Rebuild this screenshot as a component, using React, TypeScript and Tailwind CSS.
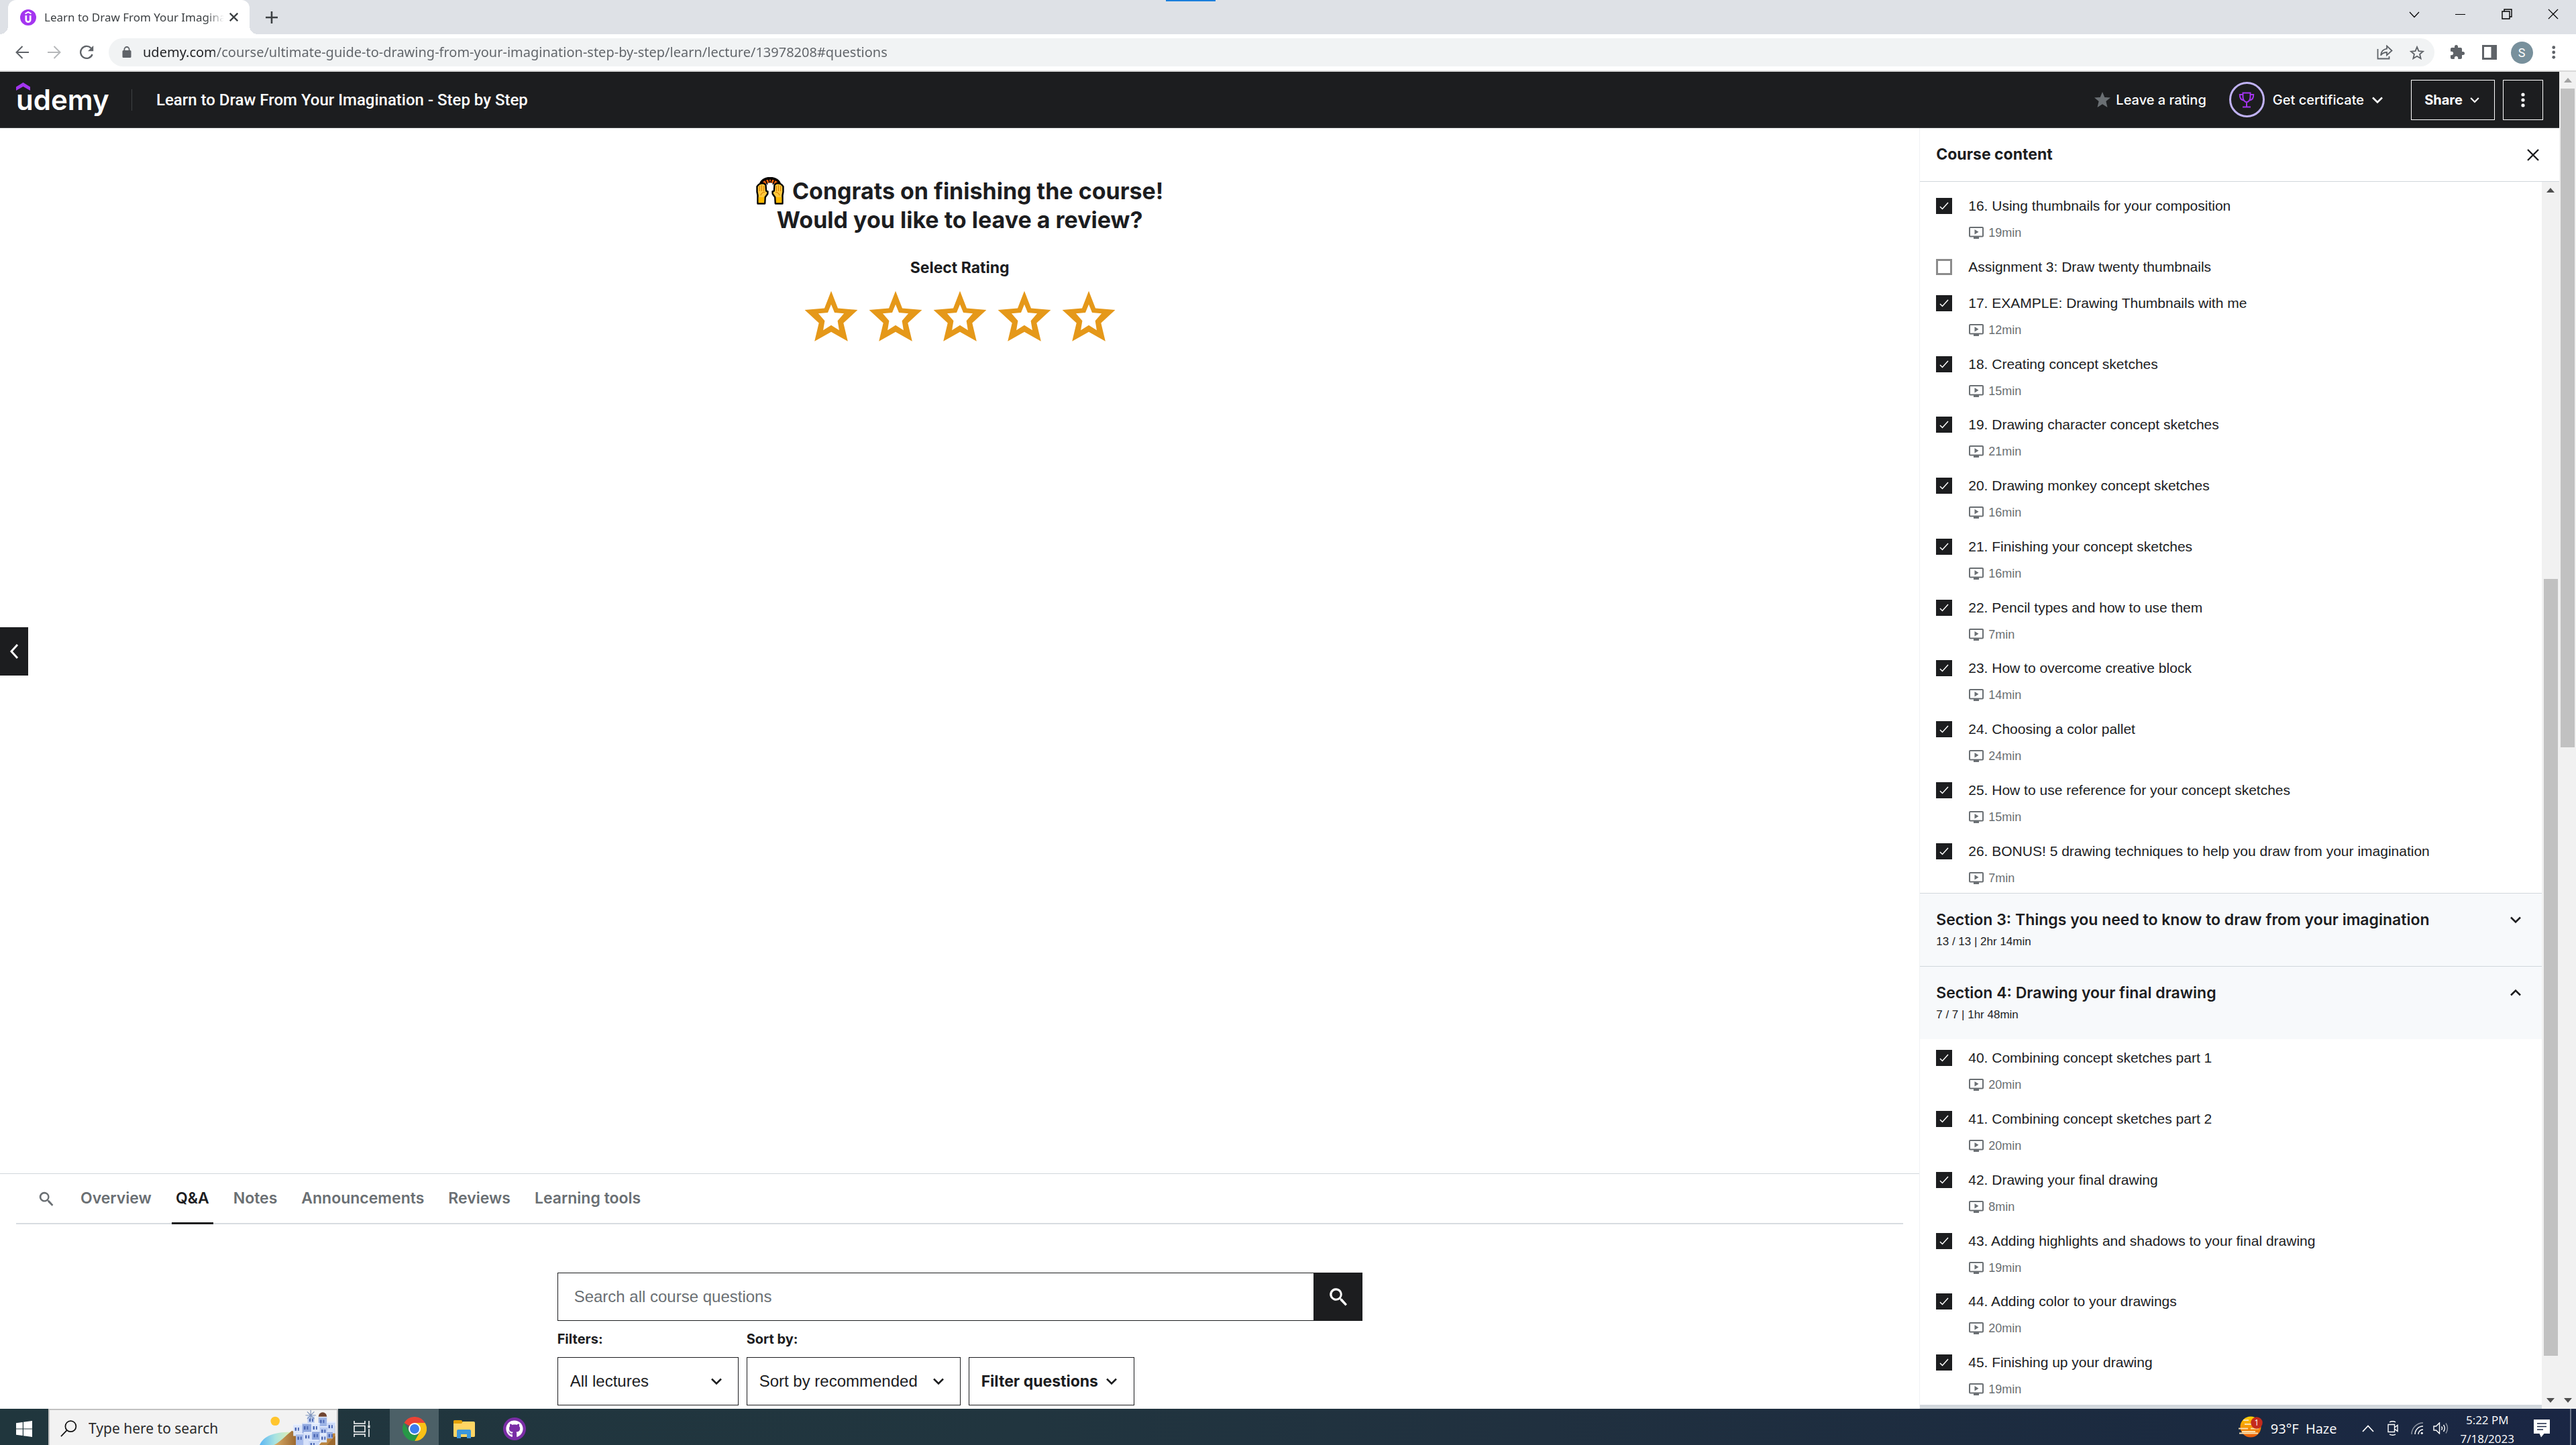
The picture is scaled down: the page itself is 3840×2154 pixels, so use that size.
import React from "react";
import { FaGithub } from "react-icons/fa";
import { MdExtension } from "react-icons/md";

type Lesson = { title: string; time?: string };

const sectionTwo: Lesson[] = [
  { title: "16. Using thumbnails for your composition", time: "19min" },
  { title: "Assignment 3: Draw twenty thumbnails" },
  { title: "17. EXAMPLE: Drawing Thumbnails with me", time: "12min" },
  { title: "18. Creating concept sketches", time: "15min" },
  { title: "19. Drawing character concept sketches", time: "21min" },
  { title: "20. Drawing monkey concept sketches", time: "16min" },
  { title: "21. Finishing your concept sketches", time: "16min" },
  { title: "22. Pencil types and how to use them", time: "7min" },
  { title: "23. How to overcome creative block", time: "14min" },
  { title: "24. Choosing a color pallet", time: "24min" },
  { title: "25. How to use reference for your concept sketches", time: "15min" },
  { title: "26. BONUS! 5 drawing techniques to help you draw from your imagination", time: "7min" },
];

const sectionFour: Lesson[] = [
  { title: "40. Combining concept sketches part 1", time: "20min" },
  { title: "41. Combining concept sketches part 2", time: "20min" },
  { title: "42. Drawing your final drawing", time: "8min" },
  { title: "43. Adding highlights and shadows to your final drawing", time: "19min" },
  { title: "44. Adding color to your drawings", time: "20min" },
  { title: "45. Finishing up your drawing", time: "19min" },
];

const pageTabs = ["Overview", "Q&A", "Notes", "Announcements", "Reviews", "Learning tools"];

function Chevron({ className = "size-6", up = false }: { className?: string; up?: boolean }) {
  return (
    <svg viewBox="0 0 24 24" className={className} fill="none" stroke="currentColor" strokeWidth="2.6" aria-hidden="true">
      <path d={up ? "M5 15.5l7-7 7 7" : "M5 8.5l7 7 7-7"} />
    </svg>
  );
}

function Cross({ className, width = 2 }: { className: string; width?: number }) {
  return (
    <svg viewBox="0 0 18 18" className={className} fill="none" stroke="currentColor" strokeWidth={width} aria-hidden="true">
      <path d="M1 1l16 16M17 1L1 17" />
    </svg>
  );
}

function Dots({ className }: { className: string }) {
  return (
    <svg viewBox="0 0 6 24" className={className} fill="currentColor" aria-hidden="true">
      <circle cx="3" cy="4" r="2.6" />
      <circle cx="3" cy="12" r="2.6" />
      <circle cx="3" cy="20" r="2.6" />
    </svg>
  );
}

function Magnifier({ className }: { className: string }) {
  return (
    <svg viewBox="0 0 24 24" className={className} fill="currentColor" aria-hidden="true">
      <path d="M16.4 14.2h-1.1l-.4-.4a7.4 7.4 0 1 0-1.1 1.1l.4.4v1.1L20.500 22.800l1.900-1.900zM9.300 14.200a4.900 4.900 0 1 1 0-9.800 4.900 4.900 0 0 1 0 9.800z" />
    </svg>
  );
}

function TabStrip() {
  return (
    <div className="relative flex h-[51px] shrink-0 bg-[#dee1e6]">
      <span className="absolute left-[1738px] top-0 h-[2px] w-[74px] bg-[#1a7fdc]" />
      <div className="relative ml-3 flex w-[360px] items-center rounded-t-xl bg-white pl-[18px] pr-[10px] before:absolute before:-left-3 before:bottom-0 before:size-3 before:bg-[radial-gradient(circle_at_0_0,transparent_12px,white_12px)] after:absolute after:-right-3 after:bottom-0 after:size-3 after:bg-[radial-gradient(circle_at_100%_0,transparent_12px,white_12px)]">
        <svg viewBox="0 0 24 24" className="size-6 shrink-0" aria-hidden="true">
          <circle cx="12" cy="12" r="12" fill="#a435f0" />
          <path d="M7.500 6.700L12 4l4.500 2.700" fill="none" stroke="white" strokeWidth="2" />
          <path d="M8.800 9v6.500a3.200 3.200 0 0 0 6.400 0V9" fill="none" stroke="white" strokeWidth="2.700" />
        </svg>
        <span className="ml-3 flex-1 overflow-hidden whitespace-nowrap font-['Noto_Sans',sans-serif] text-[17px] leading-6 text-[#3c4043] [mask-image:linear-gradient(90deg,black_90%,transparent)]">
          Learn to Draw From Your Imagination
        </span>
        <button aria-label="Close tab" className="grid size-7 place-items-center text-[#3c4043]">
          <Cross className="size-[13px]" width={3.200} />
        </button>
      </div>
      <button aria-label="New tab" className="ml-[15px] grid w-9 place-items-center text-[#3c4043]">
        <svg viewBox="0 0 18 18" className="size-[18px]" stroke="currentColor" strokeWidth="2.600" aria-hidden="true">
          <path d="M9 0v18M0 9h18" />
        </svg>
      </button>
      <div className="ml-auto flex h-[42px] text-black">
        <button aria-label="Search tabs" className="grid w-[69px] place-items-center">
          <svg viewBox="0 0 16 10" className="mt-0.5 w-4" fill="none" stroke="currentColor" strokeWidth="1.200"><path d="M1 1l7 7.500L15 1" /></svg>
        </button>
        <button aria-label="Minimize" className="grid w-[69px] place-items-center">
          <span className="h-px w-[15px] bg-black" />
        </button>
        <button aria-label="Restore" className="grid w-[69px] place-items-center">
          <svg viewBox="0 0 16 16" className="size-4" fill="none" stroke="currentColor" strokeWidth="1.400"><path d="M1 4h11v11H1zM4 4V1h11v11h-3" /></svg>
        </button>
        <button aria-label="Close" className="grid w-[69px] place-items-center">
          <Cross className="size-4" width={1.400} />
        </button>
      </div>
    </div>
  );
}

function Toolbar() {
  const btn = "grid w-12 shrink-0 place-items-center text-[#5f6368]";
  return (
    <div className="flex h-14 shrink-0 items-stretch border-b-2 border-[#d9d9d9] bg-white pl-[9px] pr-[9px]">
      <button aria-label="Back" className={btn}>
        <svg viewBox="0 0 20 20" className="size-5" fill="none" stroke="currentColor" strokeWidth="2"><path d="M10.500 1L1.500 10l9 9M1.500 10H20" /></svg>
      </button>
      <button aria-label="Forward" className={btn + " opacity-45"}>
        <svg viewBox="0 0 20 20" className="size-5" fill="none" stroke="currentColor" strokeWidth="2"><path d="M9.500 1l9 9-9 9M18.500 10H0" /></svg>
      </button>
      <button aria-label="Reload" className={btn}>
        <svg viewBox="0 0 22 22" className="size-[22px]" fill="none" stroke="currentColor" strokeWidth="2.300"><path d="M17.600 4.600A9 9 0 1 0 19.600 14" /><path d="M21.200 1v8.200h-8.200z" fill="currentColor" stroke="none" /></svg>
      </button>
      <div className="my-1.5 ml-[9px] mr-[10px] flex flex-1 items-stretch rounded-full bg-[#f1f3f4] pl-[3px] pr-[2px]">
        <button aria-label="Site information" className={btn}>
          <svg viewBox="0 0 14 18" className="h-[18px]" fill="currentColor"><path d="M2 6h10a1.500 1.500 0 0 1 1.500 1.500v8A1.500 1.500 0 0 1 12 17H2a1.500 1.500 0 0 1-1.500-1.500v-8A1.500 1.500 0 0 1 2 6z" /><path d="M3.400 7V4.600a3.600 3.600 0 0 1 7.200 0V7" fill="none" stroke="currentColor" strokeWidth="1.800" /></svg>
        </button>
        <input
          aria-label="Address"
          readOnly
          value="udemy.com/course/ultimate-guide-to-drawing-from-your-imagination-step-by-step/learn/lecture/13978208#questions"
          className="flex-1 bg-[linear-gradient(90deg,#202124_107px,#5f6368_107px)] bg-clip-text font-['Noto_Sans',sans-serif] text-[20px] text-transparent outline-none"
        />
        <button aria-label="Share page" className={btn}>
          <svg viewBox="0 0 24 22" className="w-6" fill="none" stroke="currentColor" strokeWidth="1.800"><path d="M1.500 6v14.500h17V17" /><path d="M15 1.500l7.500 7-7.500 6.700v-4.200c-4.500 0-7 1.500-9 4.500.5-5.500 3.500-9 9-9.800z" /></svg>
        </button>
        <button aria-label="Bookmark" className={btn}>
          <svg viewBox="0 0 22 21" className="w-[22px]" fill="none" stroke="currentColor" strokeWidth="1.900"><path d="M11 2.200l2.500 6 6.500.5-4.900 4.200 1.500 6.300-5.600-3.400-5.600 3.400 1.500-6.300L2 8.700l6.500-.5z" /></svg>
        </button>
      </div>
      <button aria-label="Extensions" className={btn}><MdExtension className="size-6" /></button>
      <button aria-label="Side panel" className={btn}>
        <svg viewBox="0 0 22 22" className="size-[22px]"><path fill="currentColor" fillRule="evenodd" d="M0 0h22v22H0zM3 3v16h10.500V3z" /></svg>
      </button>
      <button aria-label="Profile" className={btn}>
        <span className="grid size-[33px] place-items-center rounded-full bg-[#78909c] font-[Roboto,sans-serif] text-[18px] text-white">S</span>
      </button>
      <button aria-label="Browser menu" className={btn}><Dots className="h-[22px]" /></button>
    </div>
  );
}

function Header() {
  return (
    <header className="flex h-[84px] shrink-0 items-center border-b border-[#3e4143] bg-[#1c1d1f] px-6 text-white">
      <a href="#home" className="relative w-[136px] font-[Inter,sans-serif] text-[42px] font-semibold leading-[51px]">
        udemy
        <svg viewBox="0 0 21 12" className="absolute left-0 top-0 w-[21px]" aria-hidden="true"><path fill="#a435f0" d="M0 6.500L10.500 0 21 6.500V12L10.500 6 0 12z" /></svg>
      </a>
      <span className="ml-9 h-8 w-px bg-[#3e4143]" />
      <a href="#course" className="ml-9 font-[Roboto,sans-serif] text-[24px] font-medium leading-8">Learn to Draw From Your Imagination - Step by Step</a>
      <button className="ml-auto flex items-center gap-2 font-[Inter,sans-serif] text-[20px] font-medium">
        <svg viewBox="0 0 24 23" className="w-6" fill="#6a6f73" aria-hidden="true"><path d="M12 0l3.300 7.900 8.700.6-6.600 5.500 2.100 9L12 18.300 4.500 23l2.100-9L0 8.500l8.700-.6z" /></svg>
        Leave a rating
      </button>
      <button className="ml-[34px] flex items-center font-[Inter,sans-serif] text-[20px] font-medium">
        <span className="mr-3 grid size-[53px] place-items-center rounded-full border-[3px] border-[#c0b2f5]">
          <svg viewBox="0 0 24 24" className="size-6" fill="none" stroke="#a435f0" strokeWidth="2" aria-hidden="true"><path d="M6.500 1.500h11v6c0 5-2 7-5.500 8-3.500-1-5.500-3-5.500-8zM6.500 4H1.800c0 5 1.200 8 5.400 8.400M17.500 4h4.700c0 5-1.200 8-5.400 8.400M12 15.500V22M6 22.500h12" /></svg>
        </span>
        Get certificate
        <Chevron className="ml-2 size-6" />
      </button>
      <button className="ml-[38px] flex h-[60px] w-[125px] items-center justify-center gap-2 border border-white font-[Inter,sans-serif] text-[20px] font-bold">
        Share
        <Chevron className="size-5" />
      </button>
      <button aria-label="More options" className="ml-3 grid h-[60px] w-[60px] place-items-center border border-white"><Dots className="h-6" /></button>
    </header>
  );
}

function RaisedHands() {
  return (
    <svg viewBox="0 0 42 41" className="w-[42px]" aria-hidden="true">
      <path d="M9 12a12 8 0 0 1 24 0" fill="none" stroke="#000" strokeWidth="8.500" />
      <path d="M10.500 10.500a11 6.500 0 0 1 21 0" fill="none" stroke="#f7630c" strokeWidth="4.500" />
      <path d="M13 2l4 9M18 .5L20 8M24 .5L22 8M29 2l-4 9" stroke="#000" strokeWidth="1.700" />
      <path d="M15.500 12.500a7 5 0 0 1 11 0l-1.500 4h-8z" fill="#fff" />
      <g id="hand">
        <path d="M2.500 39.500V27L1.500 22V14L4 11l3-1.500 4-.5 3.500 2.500.6 9 2.400.8-.2 3.700-3.600 5-.5 9.500z" fill="#ffc83d" stroke="#000" strokeWidth="2.400" strokeLinejoin="round" />
        <path d="M5.500 13v8M8.500 12v9M11.500 13v8M7 27c1-3 3-4.500 6-4.500" fill="none" stroke="#d67d00" strokeWidth="1.100" />
        <path d="M3.700 30h8.400v8.200H3.700z" fill="#ffb900" />
      </g>
      <use href="#hand" transform="matrix(-1 0 0 1 42 0)" />
    </svg>
  );
}

function ReviewPanel() {
  return (
    <section className="relative flex flex-1 flex-col items-center pt-[72px] text-[#1c1d1f]">
      <h1 className="text-center font-[Inter,sans-serif] text-[34px] font-bold leading-[43px]">
        <span className="flex items-center gap-3"><RaisedHands />Congrats on finishing the course!</span>
        Would you like to leave a review?
      </h1>
      <fieldset className="mt-8 flex">
        <legend className="mx-auto mb-[6px] font-[Inter,sans-serif] text-[23px] font-bold leading-9">Select Rating</legend>
        {[1, 2, 3, 4, 5].map((n) => (
          <label key={n} className="relative">
            <input type="radio" name="rating" aria-label={n + " stars"} className="sr-only" />
            <svg viewBox="0 0 96 96" className="size-24" aria-hidden="true">
              <path fill="#e59819" fillRule="evenodd" d="M48 10.700L58 36.500l29.400 2.500L66.300 58.500l6.500 27.200L48 71.700 23.200 85.700l6.500-27.200L8.600 39 38 36.500zM48 30.700L43 43l-14.100 1.300 9.500 11-2.300 14L48 61.700l11.900 7.600-2.300-14 9.500-11L53 43z" />
            </svg>
          </label>
        ))}
      </fieldset>
      <button aria-label="Previous lecture" className="absolute left-0 top-[744px] grid h-[72px] w-[42px] place-items-center bg-[#1c1d1f] text-white">
        <svg viewBox="0 0 14 24" className="h-6" fill="none" stroke="currentColor" strokeWidth="3"><path d="M12 2L3 12l9 10" /></svg>
      </button>
    </section>
  );
}

function SelectBox({ id, label, value, className }: { id: string; label: string; value: string; className: string }) {
  return (
    <div className={className}>
      <label htmlFor={id} className="mb-3 block font-[Inter,sans-serif] text-[20px] font-bold leading-[30px]">{label}</label>
      <div className="relative flex items-center">
        <select id={id} className="h-[72px] w-full appearance-none border border-[#1c1d1f] bg-white pl-[18px] font-['Liberation_Sans',sans-serif] text-[24px]">
          <option>{value}</option>
        </select>
        <Chevron className="pointer-events-none absolute right-[21px] size-6" />
      </div>
    </div>
  );
}

function QuestionsPanel() {
  return (
    <section className="shrink-0 border-t border-[#d1d7dc] pb-[5px] text-[#1c1d1f]">
      <nav className="mx-6 flex h-[75px] items-stretch border-b-2 border-[#d8dce1] font-[Inter,sans-serif] text-[23px] font-semibold text-[#6a6f73]">
        <button aria-label="Search" className="grid w-[90px] place-items-center"><Magnifier className="size-6" /></button>
        <div className="-mb-[2px] flex gap-6">
          {pageTabs.map((t) => (
            <button key={t} className={t === "Q&A" ? "border-b-[3px] border-[#1c1d1f] px-1.5 text-[#1c1d1f]" : "px-1.5 pb-[3px]"}>{t}</button>
          ))}
        </div>
      </nav>
      <div className="mx-auto mt-[72px] w-full max-w-[1200px]">
        <form className="flex h-[72px]" onSubmit={(e) => e.preventDefault()}>
          <input aria-label="Search all course questions" placeholder="Search all course questions" className="flex-1 border border-[#1c1d1f] px-6 font-['Liberation_Sans',sans-serif] text-[24px] placeholder:text-[#6a6f73]" />
          <button aria-label="Submit search" className="grid w-[72px] place-items-center bg-[#1c1d1f] text-white"><Magnifier className="size-[30px]" /></button>
        </form>
        <div className="mt-3 flex items-end gap-3">
          <SelectBox id="filters" label="Filters:" value="All lectures" className="w-[270px]" />
          <SelectBox id="sort" label="Sort by:" value="Sort by recommended" className="w-[319px]" />
          <button className="flex h-[72px] w-[247px] items-center justify-between border border-[#1c1d1f] pl-[18px] pr-[21px] font-[Inter,sans-serif] text-[23px] font-bold">
            Filter questions
            <Chevron className="size-6" />
          </button>
        </div>
      </div>
    </section>
  );
}

function LessonRow({ title, time }: Lesson) {
  return (
    <li className={time ? "flex-[1_0_90px] px-6 pt-4" : "h-[54px] shrink-0 px-6 pt-4"}>
      <label className="flex items-center gap-6 font-['Liberation_Sans',sans-serif] text-[21px] leading-6 text-[#1c1d1f]">
        <span className="grid place-items-center *:col-start-1 *:row-start-1">
          <input type="checkbox" defaultChecked={!!time} className="size-6 appearance-none border-[3px] border-[#8c8c8c] checked:border-[#1c1d1f] checked:bg-[#1c1d1f]" />
          {time && (
            <svg viewBox="0 0 14 12" className="pointer-events-none w-[14px]" fill="none" stroke="white" strokeWidth="1.500" aria-hidden="true"><path d="M1 7l3.500 3.500L13 1" /></svg>
          )}
        </span>
        {title}
      </label>
      {time && (
        <div className="mt-4 flex items-center gap-[7px] pl-[49px] font-['Liberation_Sans',sans-serif] text-[18px] leading-6 text-[#6a6f73]">
          <svg viewBox="0 0 22 18" className="w-[22px]" fill="currentColor" aria-hidden="true"><path fillRule="evenodd" d="M2 0h18a2 2 0 0 1 2 2v11.500a2 2 0 0 1-2 2h-5V18H7v-2.500H2a2 2 0 0 1-2-2V2a2 2 0 0 1 2-2zM2 2v11.500h18V2z" /><path d="M8.500 4l6 3.800-6 3.800z" /></svg>
          {time}
        </div>
      )}
    </li>
  );
}

function SectionHeader({ title, meta, open }: { title: string; meta: string; open: boolean }) {
  return (
    <button aria-expanded={open} className="h-[109px] shrink-0 border-t border-[#d1d7dc] bg-[#f7f9fb] px-6 text-left text-[#1c1d1f]">
      <span className="flex items-center justify-between pr-[3px] font-[Inter,sans-serif] text-[23px] font-semibold leading-9">
        {title}
        <Chevron up={open} className="size-6" />
      </span>
      <span className="mb-1 block pt-[3px] font-['Liberation_Sans',sans-serif] text-[17px] leading-6">{meta}</span>
    </button>
  );
}

function Arrow({ down = false, className }: { down?: boolean; className: string }) {
  return (
    <button aria-label={down ? "Scroll down" : "Scroll up"} className="grid h-[25px] w-full shrink-0 place-items-center">
      <svg viewBox="0 0 12 7" className={className} fill="currentColor"><path d={down ? "M0 0h12L6 7z" : "M0 7h12L6 0z"} /></svg>
    </button>
  );
}

function Sidebar() {
  return (
    <aside className="flex w-1/4 shrink-0 flex-col border-l border-[#f0f2f4]">
      <div className="flex h-20 shrink-0 items-center justify-between border-b border-[#d1d7dc] pl-6 pr-[30px]">
        <h2 className="font-[Inter,sans-serif] text-[23px] font-bold text-[#1c1d1f]">Course content</h2>
        <button aria-label="Close panel" className="text-[#1c1d1f]"><Cross className="size-[18px]" width={2.400} /></button>
      </div>
      <div className="flex min-h-0 flex-1">
        <div className="flex flex-1 flex-col overflow-hidden border-b-[6px] border-[#d1d7dc] pt-2">
          <ul className="flex flex-[11_0_auto] flex-col">{sectionTwo.map((l) => <LessonRow key={l.title} {...l} />)}</ul>
          <SectionHeader title="Section 3: Things you need to know to draw from your imagination" meta="13 / 13 | 2hr 14min" open={false} />
          <SectionHeader title="Section 4: Drawing your final drawing" meta="7 / 7 | 1hr 48min" open />
          <ul className="flex flex-[6_0_auto] flex-col">{sectionFour.map((l) => <LessonRow key={l.title} {...l} />)}</ul>
        </div>
        <div className="flex w-[26px] flex-col items-center bg-[#f1f1f1]">
          <Arrow className="w-3 text-[#505050]" />
          <span className="flex-[567]" />
          <span className="w-[21px] flex-[1157] bg-[#c1c1c1]" />
          <span className="flex-[54]" />
          <Arrow down className="w-3 text-[#505050]" />
        </div>
      </div>
    </aside>
  );
}

function Castle() {
  const houses: [number, number, number, number, string][] = [
    [78, 8, 11, 16, "#c3d3f3"],
    [95, 10, 13, 18, "#9db4e6"],
    [108, 18, 13, 18, "#cfdcf7"],
    [56, 22, 14, 18, "#dbe5fa"],
    [70, 20, 14, 18, "#8ea6de"],
    [84, 20, 13, 14, "#dde8fc"],
    [97, 25, 12, 15, "#b7c9f1"],
    [60, 36, 12, 18, "#a9bdec"],
    [72, 34, 13, 20, "#d7e2fa"],
    [85, 32, 12, 18, "#90a8df"],
    [97, 36, 11, 14, "#dce6fb"],
    [108, 32, 9, 12, "#99afe2"],
    [80, 46, 16, 8, "#c9d7f5"],
  ];
  return (
    <svg viewBox="0 0 121 54" className="h-full w-[121px]" aria-hidden="true">
      <defs>
        <linearGradient id="sea" x1="0" x2="1"><stop offset="0" stopColor="#5ab6f5" /><stop offset=".5" stopColor="#a9e3e0" /><stop offset="1" stopColor="#e0efb5" /></linearGradient>
        <linearGradient id="rock" x1="0" x2="1"><stop offset="0" stopColor="#dcae68" /><stop offset="1" stopColor="#8f5d28" /></linearGradient>
      </defs>
      <path d="M4 54C10 40 26 34 52 34v20z" fill="url(#sea)" />
      <circle cx="28" cy="17" r="7" fill="#ffc52e" />
      <path d="M26 54c8-3 20-16 28-22l12 6v16z" fill="url(#rock)" />
      <path d="M96 54l25-30v30z" fill="#b98440" />
      {houses.map(([x, y, w, h, fill], i) => (
        <g key={i}>
          <path d={`M${x} ${y}h${w}v${h}h-${w}z`} fill={fill} />
          <path d={`M${x} ${y}h${w}v1.500h-${w}z`} fill="#eef4ff" />
          <path d={`M${x + 2.5} ${y + 5}h2.500v5h-2.500zM${x + 7} ${y + 5}h2v5h-2z`} fill="#4a66b3" />
        </g>
      ))}
      <path d="M95 10a6.500 6.500 0 0 1 13 0z" fill="#6f4430" />
      <path d="M83 0v16M75 8h16M77.500 2.500l11 11M88.500 2.500l-11 11" stroke="#7f94bb" strokeWidth="1.200" />
      <path d="M108 54l13-14v14z" fill="#9c692f" />
    </svg>
  );
}

function Taskbar() {
  return (
    <footer className="flex h-[54px] shrink-0 items-stretch bg-[linear-gradient(90deg,#20363d_0%,#21353f_40%,#20303f_60%,#1b2a40_85%,#1a2644_100%)] font-['Open_Sans',sans-serif] text-white">
      <button aria-label="Start" className="grid w-[72px] place-items-center pt-1.5">
        <svg viewBox="0 0 24 24" className="size-6" fill="white"><path d="M0 3.300l9.800-1.400v9.500H0zM11 1.700L24 0v11.400H11zM0 12.600h9.800v9.500L0 20.700zM11 12.600h13V24l-13-1.700z" /></svg>
      </button>
      <label className="flex w-[432px] items-stretch border-x-2 border-t-2 border-[#c1c1c1] bg-[#f2f2f2] pl-4">
        <svg viewBox="0 0 26 26" className="mt-[15px] size-[25px] shrink-0" fill="none" stroke="#111" strokeWidth="1.800" aria-hidden="true"><circle cx="16" cy="9.500" r="8.300" /><path d="M10.300 15.500L1 25" /></svg>
        <input aria-label="Type here to search" placeholder="Type here to search" className="ml-[17px] w-0 min-w-0 flex-1 bg-transparent pt-1 font-['Noto_Sans',sans-serif] text-[21px] outline-none placeholder:text-[#2b2b2b]" />
        <Castle />
      </label>
      <button aria-label="Task view" className="grid w-[77px] place-items-center pr-1.5 pt-1.5">
        <svg viewBox="0 0 25 24" className="w-[25px]" fill="none" stroke="white" strokeWidth="1.500"><path d="M1 0v4h16V0M1 24v-4h16v4M1 7.500h16v9H1zM23 0v6M23 12v12" /><path d="M21.500 6.500h3v4h-3z" fill="white" stroke="none" /></svg>
      </button>
      <button aria-label="Chrome" className="grid w-[73px] place-items-center bg-[#4c6067] pt-1.5">
        <svg viewBox="0 0 36 36" className="size-9">
          <path d="M18 18L2.400 9A18 18 0 0 1 33.600 9z" fill="#ea4335" />
          <path d="M18 9h15.600A18 18 0 0 1 18 36l7.800-13.500z" fill="#fbc116" />
          <path d="M2.400 9l7.800 13.500L18 27h5.200L18 36A18 18 0 0 1 2.400 9z" fill="#279847" />
          <circle cx="18" cy="18" r="9" fill="white" />
          <circle cx="18" cy="18" r="7" fill="#3b7ded" />
        </svg>
      </button>
      <button aria-label="File Explorer" className="grid w-[76px] place-items-center pt-1.5">
        <svg viewBox="0 0 32 27" className="w-8">
          <path d="M0 1.500A1.500 1.500 0 0 1 1.500 0H12l2 3h16a2 2 0 0 1 2 2v18a2 2 0 0 1-2 2H2a2 2 0 0 1-2-2z" fill="#e3a008" />
          <path d="M0 5h12l2-3h16a2 2 0 0 1 2 2v19a2 2 0 0 1-2 2H2a2 2 0 0 1-2-2z" fill="#ffd564" />
          <path d="M5 27V16a2 2 0 0 1 2-2h17a2 2 0 0 1 2 2v11h-6v-6h-9v6z" fill="#3c97dc" />
        </svg>
      </button>
      <button aria-label="GitHub Desktop" className="grid w-[73px] place-items-center pt-1.5">
        <span className="grid size-[34px] place-items-center rounded-full bg-[#7a2da6]"><FaGithub className="size-[26px]" /></span>
      </button>
      <div className="ml-auto flex items-center pt-1">
        <button className="-mt-1 flex items-center gap-3">
          <svg viewBox="0 0 36 32" className="w-9" aria-hidden="true">
            <defs><linearGradient id="sun" x1="0" x2="0" y1="0" y2="1"><stop offset="0" stopColor="#ffd000" /><stop offset="1" stopColor="#e8590c" /></linearGradient></defs>
            <circle cx="18" cy="16" r="15.500" fill="url(#sun)" />
            <path d="M7 6h8M9 12h14M0 18.500h14M18 18.500h12M5 23h20M1 25.500h28" stroke="#fbe0ae" strokeWidth="2.200" />
            <circle cx="27" cy="10" r="8.700" fill="#c42b1c" />
            <text x="27" y="14" textAnchor="middle" fontSize="12" fill="white">1</text>
          </svg>
          <span className="pt-1.5 text-[20px]">93°F&nbsp; Haze</span>
        </button>
        <button aria-label="Show hidden icons" className="ml-[38px]">
          <svg viewBox="0 0 18 11" className="w-[18px]" fill="none" stroke="white" strokeWidth="1.800"><path d="M1 10l8-8.500L17 10" /></svg>
        </button>
        <button aria-label="Meet now" className="ml-5">
          <svg viewBox="0 0 16 22" className="w-4" fill="none" stroke="white" strokeWidth="1.400"><path d="M1 5.500h9.500v11H1zM10.500 10L15 6.500v9L10.500 12M3 1.800q5-2.200 9 0M3 20.200q5 2.200 9 0" /></svg>
        </button>
        <button aria-label="Network" className="ml-[19px]">
          <svg viewBox="0 0 18 18" className="w-[18px]" fill="none" stroke="white" strokeWidth="1.500"><path opacity=".5" d="M1 18A17 17 0 0 1 18 1" /><path d="M6 18A12 12 0 0 1 18 6M11 18a7 7 0 0 1 7-7" /><circle cx="16.300" cy="16.300" r="1.600" fill="white" stroke="none" /></svg>
        </button>
        <button aria-label="Volume" className="ml-[15px]">
          <svg viewBox="0 0 23 18" className="w-[23px]" fill="none" stroke="white" strokeWidth="1.400"><path d="M1 6h3.500l5-5v16l-5-5H1zM12.500 6.500q2 2.500 0 5M15.500 4q3.500 5 0 10" /><path opacity=".5" d="M19 1.500q5 7.500 0 15" /></svg>
        </button>
        <button className="ml-[17px] mt-1 text-center text-[17px] leading-[28px]">
          5:22 PM
          <br />
          7/18/2023
        </button>
        <button aria-label="Notifications" className="ml-[29px] mr-[30px]">
          <svg viewBox="0 0 24 27" className="w-6" fill="white"><path d="M0 0h24v21h-8.500L11 26.500 8.500 21H0z" /><path d="M5 6h14M5 10.500h14M5 15h9" stroke="#1a2644" strokeWidth="1.500" /></svg>
        </button>
        <span className="-mt-1 mr-[7px] h-[54px] w-[2px] bg-[#6c7588]" />
      </div>
    </footer>
  );
}

export default function App() {
  return (
    <div className="flex h-screen flex-col overflow-hidden bg-white">
      <TabStrip />
      <Toolbar />
      <div className="flex min-h-0 flex-1">
        <div className="flex min-w-0 flex-1 flex-col">
          <Header />
          <div className="flex min-h-0 flex-1">
            <main className="flex min-w-0 flex-1 flex-col">
              <ReviewPanel />
              <QuestionsPanel />
            </main>
            <Sidebar />
          </div>
        </div>
        <div className="flex w-[25px] flex-col items-center bg-[#f1f1f1]">
          <Arrow className="w-3 text-[#a3a3a3]" />
          <span className="w-[21px] flex-[982] bg-[#c1c1c1]" />
          <span className="flex-[961]" />
          <Arrow down className="w-3 text-[#505050]" />
        </div>
      </div>
      <Taskbar />
    </div>
  );
}
